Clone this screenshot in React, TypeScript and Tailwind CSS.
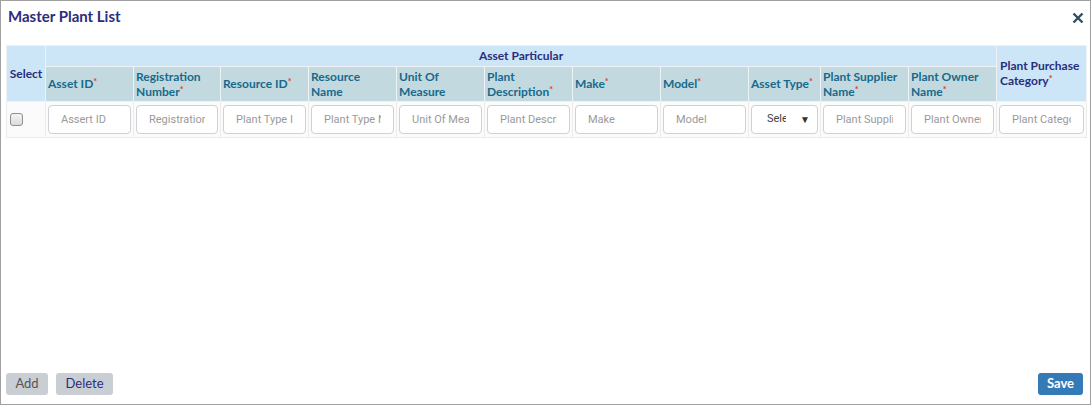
import React from "react";

const Req = () => <span className="text-[#e53935] text-[9px] relative -top-[3px]">*</span>;

const columns: { label: string; req: boolean; ph: string; w: string; select?: boolean }[] = [
  { label: "Asset ID", req: true, ph: "Assert ID", w: "w-[88px]" },
  { label: "Registration Number", req: true, ph: "Registration Number", w: "w-[87px]" },
  { label: "Resource ID", req: true, ph: "Plant Type ID", w: "w-[88px]" },
  { label: "Resource Name", req: false, ph: "Plant Type Name", w: "w-[88px]" },
  { label: "Unit Of Measure", req: false, ph: "Unit Of Measure", w: "w-[88px]" },
  { label: "Plant Description", req: true, ph: "Plant Description", w: "w-[88px]" },
  { label: "Make", req: true, ph: "Make", w: "w-[88px]" },
  { label: "Model", req: true, ph: "Model", w: "w-[88px]" },
  { label: "Asset Type", req: true, ph: "Select", w: "w-[72px]", select: true },
  { label: "Plant Supplier Name", req: true, ph: "Plant Supplier Name", w: "w-[88px]" },
  { label: "Plant Owner Name", req: true, ph: "Plant Owner Name", w: "w-[88px]" },
];

const inputCls =
  "w-full h-[29px] rounded-[4px] border border-[#d0d0d8] bg-white px-[12px] font-['Roboto',sans-serif] text-[11px] placeholder:text-[#9a9a9a] outline-none";

export default function App() {
  return (
    <div className="w-[1091px] h-[405px] border border-[#a0a0a0] bg-white flex flex-col font-['Lato','Liberation_Sans',sans-serif]">
      <div className="flex justify-between items-start pl-[7px] pr-[6px] pt-[5px] h-[44px]">
        <h1 className="text-[15px] font-bold text-[#2b2d7c] leading-[18px] pt-[1px]">Master Plant List</h1>
        <button className="text-[#2f4f5f] mt-[6px]">
          <svg width="12" height="12" viewBox="0 0 12 12">
            <path d="M1.5 1.5 L10.5 10.5 M10.5 1.5 L1.5 10.5" stroke="currentColor" strokeWidth="2.4" />
          </svg>
        </button>
      </div>

      <div className="px-[5px] flex-1">
        <table className="table-fixed border-collapse w-[1081px] text-[12px]">
          <colgroup>
            <col className="w-[39px]" />
            {columns.map((c) => (
              <col key={c.label} className={c.w} />
            ))}
            <col className="w-[90px]" />
          </colgroup>
          <thead>
            <tr className="h-[21px]">
              <th rowSpan={2} className="bg-[#cce5f7] border border-[#eef2f4] text-[#2b2d7c] font-bold text-[12px] px-[1px]">
                Select
              </th>
              <th colSpan={11} className="bg-[#cce5f7] border border-[#eef2f4] text-[#2b2d7c] font-bold text-[12px] leading-[14px]">
                Asset Particular
              </th>
              <th rowSpan={2} className="bg-[#cce5f7] border border-[#eef2f4] text-[#2b2d7c] font-bold text-[12px] leading-[15px] text-left pl-[3px] pr-[1px]">
                Plant Purchase Category<Req />
              </th>
            </tr>
            <tr className="h-[35px]">
              {columns.map((c) => (
                <th
                  key={c.label}
                  className="bg-[#c2dadf] border border-[#eef2f4] text-[#17698c] font-bold text-[12px] leading-[15px] text-left pl-[2px] pr-[4px]"
                >
                  {c.label}
                  {c.req && <Req />}
                </th>
              ))}
            </tr>
          </thead>
          <tbody>
            <tr className="h-[36px] bg-[#fbfbfb]">
              <td className="border border-[#ececec] pl-[3px]">
                <div className="w-[13px] h-[13px] rounded-[3px] border border-[#8f8f8f] bg-gradient-to-b from-[#f4f4f4] to-[#dcdcdc]" />
              </td>
              {columns.map((c) => (
                <td key={c.label} className="border border-[#ececec] px-[2px] py-[3px]">
                  {c.select ? (
                    <div className="h-[29px] rounded-[4px] border border-[#d0d0d8] bg-white flex items-center pl-[15px] pr-[7px] font-['Roboto',sans-serif] text-[11px] text-[#444]">
                      <span className="w-[19px] overflow-hidden whitespace-nowrap">Select</span>
                      <span className="ml-auto text-[10px] text-[#333]">▼</span>
                    </div>
                  ) : (
                    <input placeholder={c.ph} className={inputCls} />
                  )}
                </td>
              ))}
              <td className="border border-[#ececec] px-[2px] py-[3px]">
                <input placeholder="Plant Category" className={inputCls} />
              </td>
            </tr>
          </tbody>
        </table>
      </div>

      <div className="flex items-center px-[5px] pb-[9px]">
        <button className="h-[22px] w-[42px] rounded-[3px] bg-[#c9ced4] text-[#555] text-[13px]">Add</button>
        <button className="ml-[8px] h-[22px] w-[57px] rounded-[3px] bg-[#c9ced4] text-[#2b2d7c] text-[13px]">Delete</button>
        <button className="ml-auto mr-[2px] h-[22px] w-[45px] rounded-[3px] bg-[#337ab7] text-white font-bold text-[13px]">Save</button>
      </div>
    </div>
  );
}
